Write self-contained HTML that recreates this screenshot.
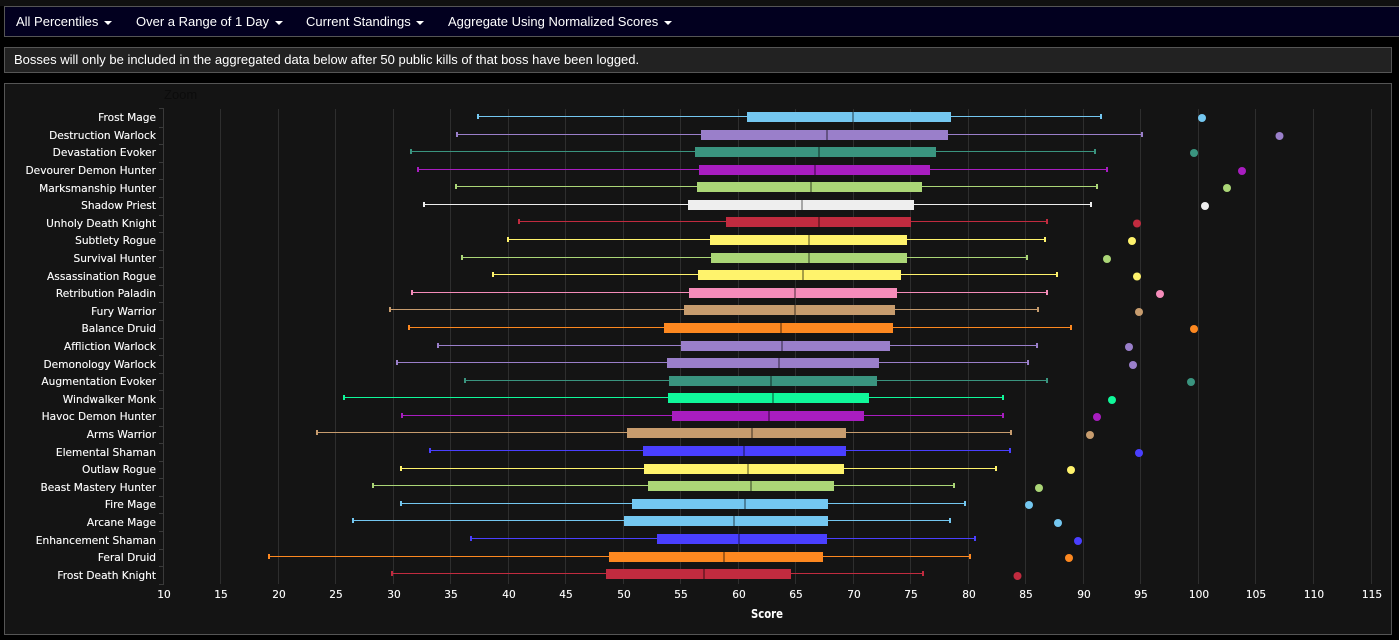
<!DOCTYPE html>
<html><head><meta charset="utf-8"><title>Class Rankings</title>
<style>
html,body{margin:0;padding:0;background:#000;width:1399px;height:640px;overflow:hidden}
body{position:relative;font-family:"Liberation Sans",Arial,sans-serif;color:#fff}
.top{position:absolute;left:0;top:0;width:1399px;height:6px;background:#101010}
.nav{position:absolute;left:4px;top:6px;width:1395px;height:29px;background:#02001f;border:1px solid #555;border-right:0;font-size:13px;line-height:29px}
.nav span{position:absolute;top:0;white-space:nowrap}
.nav i{display:inline-block;width:0;height:0;border:4px solid transparent;border-top-color:#fff;border-bottom:0;margin-left:2px;vertical-align:middle}
.note{position:absolute;left:4px;top:47px;width:1386px;height:24px;background:#222;border:1px solid #555;font-size:13px;line-height:24px;white-space:nowrap}
.note span{position:absolute;left:9px;top:0}
.panel{position:absolute;left:4px;top:83px;width:1386px;height:550px;background:#141414;border:1px solid #555}
svg{position:absolute;left:0;top:0}
.l{font:10.6px "DejaVu Sans",sans-serif;fill:#fff;stroke:#fff;stroke-width:.12px;text-anchor:end}
.t{font:10.6px "DejaVu Sans",sans-serif;fill:#fff;stroke:#fff;stroke-width:.12px;text-anchor:middle}
</style></head><body>
<div class="top"></div>
<div class="nav">
<span style="left:11px">All Percentiles <i></i></span>
<span style="left:131px">Over a Range of 1 Day <i></i></span>
<span style="left:301px">Current Standings <i></i></span>
<span style="left:443px">Aggregate Using Normalized Scores <i></i></span>
</div>
<div class="note"><span>Bosses will only be included in the aggregated data below after 50 public kills of that boss have been logged.</span></div>
<div class="panel"></div>
<svg width="1399" height="640" viewBox="0 0 1399 640">
<text x="164" y="99" font-family="Liberation Sans" font-size="13" fill="#0c0c0c">Zoom</text>
<g fill="#2e2e2e" shape-rendering="crispEdges">
<rect x="220" y="109" width="1" height="475"/><rect x="278" y="109" width="1" height="475"/><rect x="335" y="109" width="1" height="475"/><rect x="393" y="109" width="1" height="475"/><rect x="450" y="109" width="1" height="475"/><rect x="508" y="109" width="1" height="475"/><rect x="565" y="109" width="1" height="475"/><rect x="623" y="109" width="1" height="475"/><rect x="680" y="109" width="1" height="475"/><rect x="738" y="109" width="1" height="475"/><rect x="795" y="109" width="1" height="475"/><rect x="853" y="109" width="1" height="475"/><rect x="910" y="109" width="1" height="475"/><rect x="968" y="109" width="1" height="475"/><rect x="1025" y="109" width="1" height="475"/><rect x="1083" y="109" width="1" height="475"/><rect x="1140" y="109" width="1" height="475"/><rect x="1198" y="109" width="1" height="475"/><rect x="1255" y="109" width="1" height="475"/><rect x="1313" y="109" width="1" height="475"/><rect x="1371" y="109" width="1" height="475"/>
</g>
<g fill="#3a3a3a" shape-rendering="crispEdges">
<rect x="163" y="108" width="1" height="477"/>
<rect x="159" y="108" width="4" height="1"/><rect x="159" y="127" width="4" height="1"/><rect x="159" y="144" width="4" height="1"/><rect x="159" y="162" width="4" height="1"/><rect x="159" y="179" width="4" height="1"/><rect x="159" y="197" width="4" height="1"/><rect x="159" y="215" width="4" height="1"/><rect x="159" y="232" width="4" height="1"/><rect x="159" y="250" width="4" height="1"/><rect x="159" y="267" width="4" height="1"/><rect x="159" y="285" width="4" height="1"/><rect x="159" y="302" width="4" height="1"/><rect x="159" y="320" width="4" height="1"/><rect x="159" y="338" width="4" height="1"/><rect x="159" y="355" width="4" height="1"/><rect x="159" y="373" width="4" height="1"/><rect x="159" y="390" width="4" height="1"/><rect x="159" y="408" width="4" height="1"/><rect x="159" y="426" width="4" height="1"/><rect x="159" y="443" width="4" height="1"/><rect x="159" y="461" width="4" height="1"/><rect x="159" y="478" width="4" height="1"/><rect x="159" y="496" width="4" height="1"/><rect x="159" y="513" width="4" height="1"/><rect x="159" y="531" width="4" height="1"/><rect x="159" y="549" width="4" height="1"/><rect x="159" y="566" width="4" height="1"/><rect x="159" y="584" width="4" height="1"/>
</g>
<g class="labels">
<text class="l" x="156" y="121">Frost Mage</text>
<text class="l" x="156" y="139">Destruction Warlock</text>
<text class="l" x="156" y="156">Devastation Evoker</text>
<text class="l" x="156" y="174">Devourer Demon Hunter</text>
<text class="l" x="156" y="192">Marksmanship Hunter</text>
<text class="l" x="156" y="209">Shadow Priest</text>
<text class="l" x="156" y="227">Unholy Death Knight</text>
<text class="l" x="156" y="244">Subtlety Rogue</text>
<text class="l" x="156" y="262">Survival Hunter</text>
<text class="l" x="156" y="280">Assassination Rogue</text>
<text class="l" x="156" y="297">Retribution Paladin</text>
<text class="l" x="156" y="315">Fury Warrior</text>
<text class="l" x="156" y="332">Balance Druid</text>
<text class="l" x="156" y="350">Affliction Warlock</text>
<text class="l" x="156" y="368">Demonology Warlock</text>
<text class="l" x="156" y="385">Augmentation Evoker</text>
<text class="l" x="156" y="403">Windwalker Monk</text>
<text class="l" x="156" y="420">Havoc Demon Hunter</text>
<text class="l" x="156" y="438">Arms Warrior</text>
<text class="l" x="156" y="456">Elemental Shaman</text>
<text class="l" x="156" y="473">Outlaw Rogue</text>
<text class="l" x="156" y="491">Beast Mastery Hunter</text>
<text class="l" x="156" y="508">Fire Mage</text>
<text class="l" x="156" y="526">Arcane Mage</text>
<text class="l" x="156" y="544">Enhancement Shaman</text>
<text class="l" x="156" y="561">Feral Druid</text>
<text class="l" x="156" y="579">Frost Death Knight</text>
</g>
<g>
<text class="t" x="164" y="598">10</text><text class="t" x="221" y="598">15</text><text class="t" x="279" y="598">20</text><text class="t" x="336" y="598">25</text><text class="t" x="394" y="598">30</text><text class="t" x="451" y="598">35</text><text class="t" x="509" y="598">40</text><text class="t" x="566" y="598">45</text><text class="t" x="624" y="598">50</text><text class="t" x="681" y="598">55</text><text class="t" x="739" y="598">60</text><text class="t" x="796" y="598">65</text><text class="t" x="854" y="598">70</text><text class="t" x="911" y="598">75</text><text class="t" x="969" y="598">80</text><text class="t" x="1026" y="598">85</text><text class="t" x="1084" y="598">90</text><text class="t" x="1141" y="598">95</text><text class="t" x="1199" y="598">100</text><text class="t" x="1256" y="598">105</text><text class="t" x="1314" y="598">110</text><text class="t" x="1372" y="598">115</text>
<text x="751" y="618" font-family="DejaVu Sans" font-weight="bold" font-size="12" fill="#fff" textLength="32" lengthAdjust="spacingAndGlyphs">Score</text>
</g>
<g shape-rendering="crispEdges">
<g fill="#74c7f0"><rect x="478" y="116" width="623" height="1"/><rect x="477" y="114" width="2" height="5"/><rect x="1100" y="114" width="2" height="5"/><rect x="747" y="112" width="204" height="10"/><rect x="852" y="112" width="2" height="10" fill="#000" opacity=".35"/></g>
<g fill="#9a7fca"><rect x="457" y="134" width="685" height="1"/><rect x="456" y="132" width="2" height="5"/><rect x="1141" y="132" width="2" height="5"/><rect x="701" y="130" width="247" height="10"/><rect x="826" y="130" width="2" height="10" fill="#000" opacity=".35"/></g>
<g fill="#3a947f"><rect x="411" y="151" width="684" height="1"/><rect x="410" y="149" width="2" height="5"/><rect x="1094" y="149" width="2" height="5"/><rect x="695" y="147" width="241" height="10"/><rect x="818" y="147" width="2" height="10" fill="#000" opacity=".35"/></g>
<g fill="#a81dc0"><rect x="418" y="169" width="689" height="1"/><rect x="417" y="167" width="2" height="5"/><rect x="1106" y="167" width="2" height="5"/><rect x="699" y="165" width="231" height="10"/><rect x="814" y="165" width="2" height="10" fill="#000" opacity=".35"/></g>
<g fill="#abd677"><rect x="456" y="186" width="641" height="1"/><rect x="455" y="184" width="2" height="5"/><rect x="1096" y="184" width="2" height="5"/><rect x="697" y="182" width="225" height="10"/><rect x="810" y="182" width="2" height="10" fill="#000" opacity=".35"/></g>
<g fill="#eeeeee"><rect x="424" y="204" width="667" height="1"/><rect x="423" y="202" width="2" height="5"/><rect x="1090" y="202" width="2" height="5"/><rect x="688" y="200" width="226" height="10"/><rect x="801" y="200" width="2" height="10" fill="#000" opacity=".3"/></g>
<g fill="#c12b3f"><rect x="519" y="221" width="528" height="1"/><rect x="518" y="219" width="2" height="5"/><rect x="1046" y="219" width="2" height="5"/><rect x="726" y="217" width="185" height="10"/><rect x="818" y="217" width="2" height="10" fill="#000" opacity=".35"/></g>
<g fill="#fff36c"><rect x="508" y="239" width="537" height="1"/><rect x="507" y="237" width="2" height="5"/><rect x="1044" y="237" width="2" height="5"/><rect x="710" y="235" width="197" height="10"/><rect x="808" y="235" width="2" height="10" fill="#000" opacity=".35"/></g>
<g fill="#abd677"><rect x="462" y="257" width="565" height="1"/><rect x="461" y="255" width="2" height="5"/><rect x="1026" y="255" width="2" height="5"/><rect x="711" y="253" width="196" height="10"/><rect x="808" y="253" width="2" height="10" fill="#000" opacity=".35"/></g>
<g fill="#fff36c"><rect x="493" y="274" width="564" height="1"/><rect x="492" y="272" width="2" height="5"/><rect x="1056" y="272" width="2" height="5"/><rect x="698" y="270" width="203" height="10"/><rect x="802" y="270" width="2" height="10" fill="#000" opacity=".35"/></g>
<g fill="#f58cba"><rect x="412" y="292" width="635" height="1"/><rect x="411" y="290" width="2" height="5"/><rect x="1046" y="290" width="2" height="5"/><rect x="689" y="288" width="208" height="10"/><rect x="794" y="288" width="2" height="10" fill="#000" opacity=".35"/></g>
<g fill="#c79c6e"><rect x="390" y="309" width="648" height="1"/><rect x="389" y="307" width="2" height="5"/><rect x="1037" y="307" width="2" height="5"/><rect x="684" y="305" width="211" height="10"/><rect x="794" y="305" width="2" height="10" fill="#000" opacity=".35"/></g>
<g fill="#fd8820"><rect x="409" y="327" width="662" height="1"/><rect x="408" y="325" width="2" height="5"/><rect x="1070" y="325" width="2" height="5"/><rect x="664" y="323" width="229" height="10"/><rect x="780" y="323" width="2" height="10" fill="#000" opacity=".35"/></g>
<g fill="#9a7fca"><rect x="438" y="345" width="599" height="1"/><rect x="437" y="343" width="2" height="5"/><rect x="1036" y="343" width="2" height="5"/><rect x="681" y="341" width="209" height="10"/><rect x="781" y="341" width="2" height="10" fill="#000" opacity=".35"/></g>
<g fill="#9a7fca"><rect x="397" y="362" width="631" height="1"/><rect x="396" y="360" width="2" height="5"/><rect x="1027" y="360" width="2" height="5"/><rect x="667" y="358" width="212" height="10"/><rect x="778" y="358" width="2" height="10" fill="#000" opacity=".35"/></g>
<g fill="#3a947f"><rect x="465" y="380" width="582" height="1"/><rect x="464" y="378" width="2" height="5"/><rect x="1046" y="378" width="2" height="5"/><rect x="669" y="376" width="208" height="10"/><rect x="770" y="376" width="2" height="10" fill="#000" opacity=".35"/></g>
<g fill="#10f89a"><rect x="344" y="397" width="659" height="1"/><rect x="343" y="395" width="2" height="5"/><rect x="1002" y="395" width="2" height="5"/><rect x="668" y="393" width="201" height="10"/><rect x="772" y="393" width="2" height="10" fill="#000" opacity=".35"/></g>
<g fill="#a81dc0"><rect x="402" y="415" width="601" height="1"/><rect x="401" y="413" width="2" height="5"/><rect x="1002" y="413" width="2" height="5"/><rect x="672" y="411" width="192" height="10"/><rect x="768" y="411" width="2" height="10" fill="#000" opacity=".35"/></g>
<g fill="#c79c6e"><rect x="317" y="432" width="694" height="1"/><rect x="316" y="430" width="2" height="5"/><rect x="1010" y="430" width="2" height="5"/><rect x="627" y="428" width="219" height="10"/><rect x="751" y="428" width="2" height="10" fill="#000" opacity=".35"/></g>
<g fill="#4a3fff"><rect x="430" y="450" width="580" height="1"/><rect x="429" y="448" width="2" height="5"/><rect x="1009" y="448" width="2" height="5"/><rect x="643" y="446" width="203" height="10"/><rect x="743" y="446" width="2" height="10" fill="#000" opacity=".35"/></g>
<g fill="#fff36c"><rect x="401" y="468" width="595" height="1"/><rect x="400" y="466" width="2" height="5"/><rect x="995" y="466" width="2" height="5"/><rect x="644" y="464" width="200" height="10"/><rect x="747" y="464" width="2" height="10" fill="#000" opacity=".35"/></g>
<g fill="#abd677"><rect x="373" y="485" width="581" height="1"/><rect x="372" y="483" width="2" height="5"/><rect x="953" y="483" width="2" height="5"/><rect x="648" y="481" width="186" height="10"/><rect x="750" y="481" width="2" height="10" fill="#000" opacity=".35"/></g>
<g fill="#74c7f0"><rect x="401" y="503" width="564" height="1"/><rect x="400" y="501" width="2" height="5"/><rect x="964" y="501" width="2" height="5"/><rect x="632" y="499" width="196" height="10"/><rect x="744" y="499" width="2" height="10" fill="#000" opacity=".35"/></g>
<g fill="#74c7f0"><rect x="353" y="520" width="597" height="1"/><rect x="352" y="518" width="2" height="5"/><rect x="949" y="518" width="2" height="5"/><rect x="624" y="516" width="204" height="10"/><rect x="733" y="516" width="2" height="10" fill="#000" opacity=".35"/></g>
<g fill="#4a3fff"><rect x="471" y="538" width="504" height="1"/><rect x="470" y="536" width="2" height="5"/><rect x="974" y="536" width="2" height="5"/><rect x="657" y="534" width="170" height="10"/><rect x="738" y="534" width="2" height="10" fill="#000" opacity=".35"/></g>
<g fill="#fd8820"><rect x="269" y="556" width="701" height="1"/><rect x="268" y="554" width="2" height="5"/><rect x="969" y="554" width="2" height="5"/><rect x="609" y="552" width="214" height="10"/><rect x="723" y="552" width="2" height="10" fill="#000" opacity=".35"/></g>
<g fill="#c12b3f"><rect x="392" y="573" width="531" height="1"/><rect x="391" y="571" width="2" height="5"/><rect x="922" y="571" width="2" height="5"/><rect x="606" y="569" width="185" height="10"/><rect x="703" y="569" width="2" height="10" fill="#000" opacity=".35"/></g>
</g>
<g>
<circle cx="1202" cy="118" r="4" fill="#74c7f0"/>
<circle cx="1279.5" cy="136" r="4" fill="#9a7fca"/>
<circle cx="1194" cy="153" r="4" fill="#3a947f"/>
<circle cx="1242" cy="171" r="4" fill="#a81dc0"/>
<circle cx="1227" cy="188" r="4" fill="#abd677"/>
<circle cx="1205" cy="206" r="4" fill="#eeeeee"/>
<circle cx="1137" cy="223.5" r="4" fill="#c12b3f"/>
<circle cx="1132" cy="241" r="4" fill="#fff36c"/>
<circle cx="1107" cy="259" r="4" fill="#abd677"/>
<circle cx="1137" cy="276.5" r="4" fill="#fff36c"/>
<circle cx="1160" cy="294" r="4" fill="#f58cba"/>
<circle cx="1139" cy="312" r="4" fill="#c79c6e"/>
<circle cx="1194" cy="329" r="4" fill="#fd8820"/>
<circle cx="1129" cy="347" r="4" fill="#9a7fca"/>
<circle cx="1133" cy="365" r="4" fill="#9a7fca"/>
<circle cx="1191" cy="382" r="4" fill="#3a947f"/>
<circle cx="1112" cy="400" r="4" fill="#10f89a"/>
<circle cx="1097" cy="417" r="4" fill="#a81dc0"/>
<circle cx="1090" cy="435" r="4" fill="#c79c6e"/>
<circle cx="1139" cy="453" r="4" fill="#4a3fff"/>
<circle cx="1071" cy="470" r="4" fill="#fff36c"/>
<circle cx="1039" cy="488" r="4" fill="#abd677"/>
<circle cx="1029" cy="505" r="4" fill="#74c7f0"/>
<circle cx="1058" cy="523" r="4" fill="#74c7f0"/>
<circle cx="1078" cy="541" r="4" fill="#4a3fff"/>
<circle cx="1069" cy="558" r="4" fill="#fd8820"/>
<circle cx="1017.5" cy="576" r="4" fill="#c12b3f"/>
</g>
</svg>
</body></html>
